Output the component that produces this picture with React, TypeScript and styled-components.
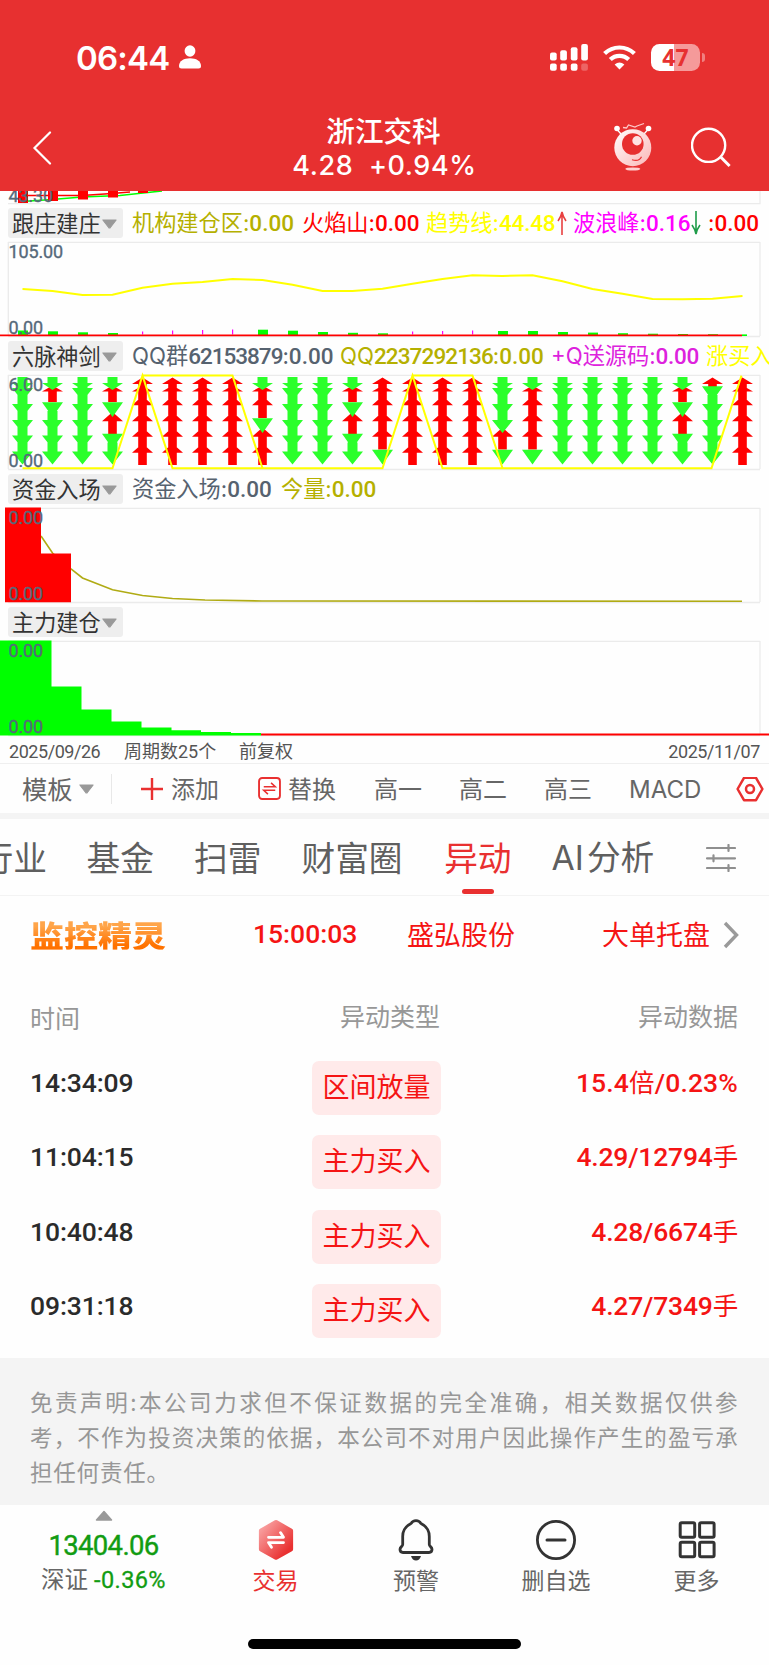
import React from "react";
import styled, { createGlobalStyle } from "styled-components";

const CJK = '"Noto Sans CJK SC", sans-serif';
const NUM = `Roboto, ${CJK}`;
const UI = `Inter, ${CJK}`;

const Global = createGlobalStyle`
  html, body { margin: 0; padding: 0; background: #fff; }
  * { box-sizing: border-box; }
  svg { display: block; flex: none; }
`;

const Screen = styled.main`
  width: 769px;
  height: 1665px;
  overflow: hidden;
  background: #fefefe;
  font-family: ${UI};
  color: #5c5c5c;
  display: flex;
  flex-direction: column;
  > * { flex: none; }
`;

/* ---------- header ---------- */
const Header = styled.header`
  height: 191px;
  background: #e73030;
  color: #fff;
  display: flex;
  flex-direction: column;
`;
const StatusBar = styled.div`
  height: 107px;
  padding: 7px 64px 0 76px;
  display: flex;
  align-items: center;
`;
const Clock = styled.span`
  font-size: 33px;
  font-weight: 600;
  line-height: 40px;
  padding-top: 1px;
  letter-spacing: -0.8px;
  width: 102px;
  white-space: nowrap;
`;
const StatusIcons = styled.div`
  margin-left: auto;
  display: flex;
  align-items: center;
  gap: 15px;
`;
const Battery = styled.div`
  width: 49px;
  height: 27px;
  border-radius: 8.5px;
  background: linear-gradient(90deg, #fff 47%, #f59a9a 47%);
  color: #e73030;
  font: 700 23px/27px "Noto Sans", sans-serif;
  text-align: center;
`;
const BatteryGroup = styled.div`
  display: flex;
  align-items: center;
  gap: 2px;
`;
const BatteryNub = styled.i`
  width: 3px;
  height: 9px;
  border-radius: 0 4px 4px 0;
  background: #f08080;
`;
const TitleBar = styled.div`
  height: 84px;
  display: flex;
  padding: 0 38px 0 32px;
`;
const TitleSide = styled.div<{ $end?: boolean }>`
  width: 150px;
  display: flex;
  justify-content: ${(p) => (p.$end ? "flex-end" : "flex-start")};
  gap: 38px;
  padding-top: ${(p) => (p.$end ? 15 : 24)}px;
`;
const TitleText = styled.div`
  flex: 1;
  display: flex;
  flex-direction: column;
  align-items: center;
  padding-left: 4px;
`;
const StockName = styled.h1`
  margin: 4px 0 0;
  font: 500 28.6px/38px ${CJK};
`;
const StockPrice = styled.div`
  margin-top: 2px;
  padding-left: 2px;
  font: 500 27px/30px Inter, sans-serif;
  white-space: pre;
  letter-spacing: 0.6px;
`;
const SearchIcon = styled.svg`
  margin-top: 4px;
`;

/* ---------- indicator panels ---------- */
const PanelHead = styled.div`
  height: 30px;
  padding-left: 8px;
  display: flex;
  align-items: center;
`;
const IndicatorChip = styled.div`
  flex: none;
  width: 115px;
  height: 30px;
  margin-right: 9px;
  padding: 0 0 2px 4px;
  border-radius: 3px;
  background: #eeeeee;
  color: #333;
  font: 400 22.2px/28px ${CJK};
  display: flex;
  align-items: center;
  gap: 1px;
  svg { margin-top: 4px; }
`;
const Legend = styled.span<{ $w: number; $color: string; $shift?: number }>`
  flex: none;
  width: ${(p) => p.$w}px;
  margin-left: ${(p) => p.$shift ?? 0}px;
  color: ${(p) => p.$color};
  font: 400 22.2px/29px ${UI};
  padding-bottom: 1px;
  white-space: nowrap;
`;
const Value = styled.b<{ $sp?: number }>`
  font: 500 22.5px/29px ${NUM};
  letter-spacing: ${(p) => p.$sp ?? 0}px;
`;

const DateRow = styled.div`
  height: 24px;
  padding: 0 9px;
  display: flex;
  align-items: center;
  border-bottom: 1px solid #efefef;
  color: #555;
  font: 400 18px/24px ${NUM};
  span { white-space: nowrap; }
`;
const DateItem = styled.span<{ $w?: number; $sp?: number }>`
  width: ${(p) => (p.$w ? `${p.$w}px` : "auto")};
  margin-left: ${(p) => (p.$w ? 0 : "auto")};
  letter-spacing: ${(p) => p.$sp ?? 0}px;
`;

/* ---------- toolbar + tabs ---------- */
const Toolbar = styled.div`
  height: 49px;
  padding: 2px 0 0 22px;
  display: flex;
  align-items: center;
  color: #666;
  font: 400 24px/47px ${UI};
`;
const Tool = styled.div<{ $w: number; $gap?: number; $size?: number }>`
  flex: none;
  width: ${(p) => p.$w}px;
  display: flex;
  align-items: center;
  gap: ${(p) => p.$gap ?? 8}px;
  font-size: ${(p) => p.$size ?? 24}px;
  white-space: nowrap;
  svg { margin-bottom: 2px; }
`;
const ToolDivider = styled.i`
  width: 1px;
  height: 30px;
  background: #e8e8e8;
  margin: 0 29px 2px 0;
`;
const Band = styled.div`
  height: 6px;
  background: #f4f4f4;
`;
const Tabs = styled.nav`
  height: 77px;
  border-bottom: 1px solid #f3f3f3;
  display: flex;
  gap: 39.6px;
  color: #5f5f5f;
  font: 400 33.7px/79px ${UI};
`;
const Tab = styled.div<{ $active?: boolean; $shift?: number }>`
  flex: none;
  display: flex;
  flex-direction: column;
  align-items: center;
  margin-left: ${(p) => p.$shift ?? 0}px;
  color: ${(p) => (p.$active ? "#e93030" : "inherit")};
  white-space: nowrap;
  height: 76px;
`;
const LatinTab = styled(Tab)`
  flex-direction: row;
  gap: 3px;
`;
const Underline = styled.i`
  width: 32px;
  height: 5px;
  margin-top: -9px;
  border-radius: 3px;
  background: #e93030;
`;
const FilterIcon = styled.svg`
  margin: 25px 0 0 12px;
`;

/* ---------- alerts ---------- */
const AlertRow = styled.div`
  height: 89px;
  padding: 0 30px 14px 30px;
  display: flex;
  align-items: center;
  color: #f51414;
  font: 400 27px/40px ${CJK};
  svg { margin-top: 2px; }
`;
const Brand = styled.strong`
  width: 223px;
  font: 900 34px/34px ${CJK};
  padding-top: 3px;
  span {
    display: inline-block;
    transform: scaleY(0.86);
    background: linear-gradient(#ffa54a 20%, #ff7200 85%);
    -webkit-background-clip: text;
    background-clip: text;
    color: transparent;
  }
`;
const AlertTime = styled.span`
  width: 154px;
  font: 500 26.5px/40px ${NUM};
`;
const AlertKind = styled.span`
  margin-left: auto;
  margin-right: 13px;
`;
const TableHead = styled.div`
  height: 64px;
  padding: 0 31px 0 30px;
  display: grid;
  grid-template-columns: 218px 192px 1fr;
  justify-items: end;
  align-items: center;
  color: #979797;
  font: 400 25px/40px ${CJK};
  span { margin-bottom: 4px; }
  span:first-child { justify-self: start; margin-bottom: 0; }
`;
const TableRow = styled.div`
  height: 74.3px;
  padding: 0 31px 0 30px;
  display: grid;
  grid-template-columns: 219px 192px 1fr;
  justify-items: end;
  font: 500 26.5px/40px ${NUM};
`;
const RowTime = styled.span`
  justify-self: start;
  color: #2b2b2b;
  padding-top: 2px;
  letter-spacing: -0.1px;
`;
const Badge = styled.span`
  width: 129px;
  height: 54px;
  border-radius: 7px;
  background: #ffeaea;
  color: #f51414;
  font: 400 27px/50px ${CJK};
  text-align: center;
`;
const RowData = styled.span<{ $sp: number }>`
  color: #f51414;
  letter-spacing: ${(p) => p.$sp}px;
  i { font: 400 25.5px/40px ${CJK}; }
`;
const TableBody = styled.div`
  height: 308.5px;
  padding-top: 12px;
`;
const Disclaimer = styled.div`
  height: 147px;
  background: #f4f4f4;
  padding: 26px 31px 0 30px;
  color: #979797;
  font: 400 22.5px/35px ${CJK};
`;
const DisclaimerLine = styled.div<{ $last?: boolean }>`
  height: 35px;
  white-space: nowrap;
  display: flex;
  letter-spacing: ${(p) => (p.$last ? 0.8 : 0)}px;
  justify-content: ${(p) => (p.$last ? "flex-start" : "space-between")};
`;

/* ---------- bottom bar ---------- */
const BottomBar = styled.footer`
  height: 160px;
  display: flex;
  flex-direction: column;
  align-items: center;
`;
const BottomRow = styled.div`
  width: 769px;
  height: 134.5px;
  display: grid;
  grid-template-columns: 207px 137px 144px 136px 145px;
`;
const IndexCell = styled.div`
  display: flex;
  flex-direction: column;
  align-items: center;
  padding-top: 5px;
  color: #129c12;
`;
const IndexValue = styled.div`
  margin-top: 9px;
  font: 400 27.5px/32px ${NUM};
  letter-spacing: -0.65px;
  -webkit-text-stroke: 0.4px #129c12;
`;
const IndexChange = styled.div`
  margin-top: 2px;
  font: 400 23.5px/32px ${NUM};
  -webkit-text-stroke: 0.3px #129c12;
  letter-spacing: 0.4px;
  white-space: nowrap;
  span { color: #666; -webkit-text-stroke: 0; margin-right: 6px; letter-spacing: 0; }
`;
const Action = styled.div<{ $hot?: boolean }>`
  display: flex;
  flex-direction: column;
  align-items: center;
  padding-top: 13px;
  color: ${(p) => (p.$hot ? "#e93030" : "#666")};
  font: 400 23px/34px ${CJK};
`;
const HomeIndicator = styled.i`
  width: 273px;
  height: 10px;
  border-radius: 5px;
  background: #000;
`;

const Caret = () => (
  <svg width="15" height="10" viewBox="0 0 14 9">
    <path d="M.8 .8h12.4L7.8 7.8q-.8.9-1.6 0z" fill="#999" stroke="#999" strokeLinejoin="round" />
  </svg>
);

const xAt = (i: number) => 22.5 + 30 * i;

const Frame = () => <path d="M8 4.3H760M8.2 98.5H760M8.3 4V98M760 4V98" stroke="#ebebeb" strokeWidth="1.3" fill="none" />;
const Scale = ({ y, children }: { y: number; children: string }) => (
  <text x="8.5" y={y} fontFamily="Roboto" fontSize="18" letterSpacing="-.15" fill="#56697a" stroke="#56697a" strokeWidth=".35">
    {children}
  </text>
);

const trend = [51, 53, 57, 56.7, 49.7, 45.7, 44, 41, 42, 46.7, 53, 53, 50.7, 45.7, 41, 37.3, 38, 37.3, 43.3, 51, 55.7, 61, 61.3, 60.7, 58];
const volume = [4.5, 3.7, 2.7, 2, 0, 0, 0, 0, 5.3, 4.3, 3, 2.2, 1.7, 0, 0, 0, 4, 4, 3, 2.4, 1.8, 1.3, 1, 0.8, 0.6];
const ticks: [number, number][] = [[4, 3], [5, 4], [6, 4.5], [7, 5], [13, 3], [14, 3.5], [15, 4]];

const TrendChart = () => (
  <svg width="769" height="103">
    <Frame />
    <Scale y={20}>105.00</Scale>
    {volume.map((v, i) => v > 0 && <rect key={i} x={xAt(i) + (i === 24 ? -0.5 : -4.5)} y={97 - v} width={i === 24 ? 5 : 10} height={v + (i === 24 ? 1 : 0)} fill="#0f0" />)}
    {ticks.map(([i, v]) => <rect key={i} x={xAt(i) - 0.5} y={96.5 - v} width="1.2" height={v} fill="#f0f" />)}
    <path d="M0 97.4H742" stroke="red" strokeWidth="1.6" />
    <Scale y={96}>0.00</Scale>
    <polyline points={trend.map((y, i) => `${xAt(i)},${y}`).join(" ")} fill="none" stroke="#ff0" strokeWidth="2" />
  </svg>
);

const signals = [
  "GGGGGG", "GRGGGG", "GGGGGG", "GRGRGG", "RRRRRR", "RRRRRR", "RRRRRR", "RRRRRR", "GRRGRR",
  "GGGGGG", "GGGGGG", "GRGRGG", "RRRRRG", "RRRRRR", "RRRRRR", "RRRRRR", "GGGGRG", "GRRRRG",
  "GGGGGG", "GGGGGG", "GGGGGG", "GGGGGG", "GRGRGG", "RGGGGG", "RRRRRR",
];
const upTip = [6.5, 14.5, 25, 41, 56.5, 72.5];
const downTip = [19, 30, 46, 62, 77.5, 93.5];

const upArrow = (x: number, k: number) => {
  const t = upTip[k];
  const head = k === 0 ? 6.5 : k === 1 ? 6 : 9.3;
  const foot = k === 0 ? 19 : k === 1 ? 31 : Math.min(t + 22, 94);
  return `M${x} ${t}L${x + 10.5} ${t + head}H${x + 4.3}V${foot}H${x - 4.3}V${t + head}H${x - 10.5}Z`;
};
/* The stem reaches up into the arrow above only where that one also points down. */
const downArrow = (x: number, k: number, joined: boolean) => {
  const t = downTip[k];
  const base = k === 0 ? 12 : t - (joined ? 13 : 14.8);
  const top = k === 0 ? 6 : joined ? base - (k === 1 ? 4 : 9) : base;
  return `M${x} ${t}L${x + 10.5} ${base}H${x + 5}V${top}H${x - 5}V${base}H${x - 10.5}Z`;
};

const SignalChart = () => (
  <svg width="769" height="103">
    <Frame />
    {signals.map((s, i) => {
      const x = xAt(i);
      const ks = [0, 1, 2, 3, 4, 5];
      return (
        <g key={i}>
          <path d={ks.filter((k) => s[k] === "R").map((k) => upArrow(x, k)).join("")} fill="red" />
          <path d={ks.filter((k) => s[k] === "G").map((k) => downArrow(x, k, s[k - 1] === "G")).join("")} fill="#2bff2b" />
        </g>
      );
    })}
    <g stroke="#ff0" strokeWidth="2" fill="none">
      <polyline points="22.5,97.3 112.5,97.3 142.5,4.6 172.5,97.3 382.5,97.3 412.5,4.6 442.5,97.3 711.5,97.3 741.5,4.6" />
      <polyline points="142.5,4.6 232.5,4.6 262.5,97.3" />
      <polyline points="412.5,4.6 472.5,4.6 502.5,97.3" />
    </g>
    <Scale y={20}>6.00</Scale>
    <Scale y={96}>0.00</Scale>
  </svg>
);

const InflowChart = () => (
  <svg width="769" height="103">
    <Frame />
    <path d="M41 32L52.5 49L71 65L82.5 74L112.5 85.7L142.5 91.5L172.5 94.5L205 96L262 97L742 97.3" fill="none" stroke="#b0ab14" strokeWidth="1.6" />
    <path d="M5 3.5H41V49.5H71V98.3H5Z" fill="red" />
    <Scale y={20}>0.00</Scale>
    <Scale y={96}>0.00</Scale>
  </svg>
);

const BuildChart = () => (
  <svg width="769" height="103">
    <Frame />
    <path d="M0 3.5H51.5V49.5H81.5V72.5H111.5V84.5H141.5V90.5H171.5V93.2H201V95H231V96H261V98.5H0Z" fill="#0f0" />
    <path d="M261 97.4H769" stroke="red" strokeWidth="2" />
    <Scale y={20}>0.00</Scale>
    <Scale y={96}>0.00</Scale>
  </svg>
);

const TopChart = () => (
  <svg width="769" height="17">
    <path d="M8 12.7H760V0" fill="none" stroke="#ebebeb" strokeWidth="1.3" />
    <path d="M22 10.5L52 8.5L82 6L120 4.5L143 2L162 0" fill="none" stroke="#0f0" strokeWidth="1.6" />
    <path d="M22 4.5H82L112 2.5L130 1" fill="none" stroke="red" strokeWidth="1.4" />
    <path d="M18 0H28V12H18ZM48 0H58V10H48ZM78 0H88V8.5H78ZM108 0H118V6.5H108ZM138 0H148V2H138Z" fill="red" />
    <Scale y={10.5}>43.30</Scale>
  </svg>
);

const rows = [
  ["14:34:09", "区间放量", "15.4", "倍", "/0.23%"],
  ["11:04:15", "主力买入", "4.29/12794", "手", ""],
  ["10:40:48", "主力买入", "4.28/6674", "手", ""],
  ["09:31:18", "主力买入", "4.27/7349", "手", ""],
];

const disclaimer = [
  "免责声明:本公司力求但不保证数据的完全准确，相关数据仅供参",
  "考，不作为投资决策的依据，本公司不对用户因此操作产生的盈亏承",
  "担任何责任。",
];

export default function App() {
  return (
    <Screen>
      <Global />
      <Header>
        <StatusBar>
          <Clock>06:44</Clock>
          <svg width="24" height="24" viewBox="0 0 24 24" fill="#fff">
            <ellipse cx="12" cy="6" rx="5.4" ry="5.8" />
            <path d="M1 21C1 16 6 13.3 12 13.3S23 16 23 21Q23 23.5 20.5 23.5H3.5Q1 23.5 1 21Z" />
          </svg>
          <StatusIcons>
            <svg width="38" height="27" viewBox="0 0 38 27" fill="#fff">
              <rect x="0" y="8.5" width="6.7" height="8" rx="2" />
              <rect x="10.2" y="6.3" width="6.7" height="10.2" rx="2" />
              <rect x="20.8" y="3.2" width="6.7" height="13.3" rx="2" />
              <rect x="31.2" y="0" width="6.7" height="16.5" rx="2" />
              <rect x="0" y="19.5" width="6.7" height="7.3" rx="2" />
              <rect x="10.2" y="19.5" width="6.7" height="7.3" rx="2" />
              <rect x="20.8" y="19.5" width="6.7" height="7.3" rx="2" />
              <rect x="31.2" y="19.5" width="6.7" height="7.3" rx="2" opacity=".25" />
            </svg>
            <svg width="33" height="25" viewBox="0 0 33 25" fill="none" stroke="#fff" strokeWidth="4.2">
              <path d="M1.6 8.6A21.2 21.2 0 0 1 31.4 8.6" />
              <path d="M7.3 14.6A13 13 0 0 1 25.7 14.6" />
              <path d="M11.6 19.5Q16.5 15.6 21.4 19.5L16.5 24.6Z" fill="#fff" stroke="none" />
            </svg>
            <BatteryGroup>
              <Battery>47</Battery>
              <BatteryNub />
            </BatteryGroup>
          </StatusIcons>
        </StatusBar>
        <TitleBar>
          <TitleSide>
            <svg width="20" height="34" viewBox="0 0 20 34">
              <path d="M18 1.5L2.5 17L18 32.5" fill="none" stroke="#fff" strokeWidth="2.2" strokeLinecap="round" />
            </svg>
          </TitleSide>
          <TitleText>
            <StockName>浙江交科</StockName>
            <StockPrice>{"4.28  +0.94%"}</StockPrice>
          </TitleText>
          <TitleSide $end>
            <svg width="40" height="50" viewBox="0 0 40 50">
              <defs>
                <linearGradient id="bot" x1="0" y1="0" x2="1" y2="1">
                  <stop offset="0" stopColor="#fff" />
                  <stop offset="1" stopColor="#fbb6b6" />
                </linearGradient>
              </defs>
              <g stroke="#fff" strokeWidth="1.3" fill="none">
                <path d="M4 7.5L8 12M35 7.5L31 12" />
                <path d="M10 5.5L13.5 6L15.5 3L22 5L24 4L31 1.5" stroke="#ffc9c9" />
              </g>
              <circle cx="4" cy="6.5" r="2.8" fill="#fff" />
              <circle cx="35.5" cy="6.5" r="2.8" fill="#fff" />
              <circle cx="19.8" cy="25.7" r="18.5" fill="url(#bot)" />
              <circle cx="19.8" cy="22" r="10.8" fill="#e73030" />
              <circle cx="24" cy="18.7" r="4.7" fill="#ffe3e3" />
              <path d="M19 37.7Q26 40 28.5 34.7" stroke="#e73030" strokeWidth="1.2" fill="none" />
              <ellipse cx="19.8" cy="47" rx="7.5" ry="1.6" fill="#ffd0d0" />
            </svg>
            <SearchIcon width="40" height="42" viewBox="0 0 40 42" fill="none" stroke="#fff" strokeWidth="2.4">
              <circle cx="17.6" cy="19.3" r="16.6" />
              <path d="M29.2 30.5L38.6 40" strokeWidth="3" />
            </SearchIcon>
          </TitleSide>
        </TitleBar>
      </Header>

      <TopChart />
      <PanelHead>
        <IndicatorChip>跟庄建庄<Caret /></IndicatorChip>
        <Legend $w={170} $color="#b5b000">机构建仓区:<Value>0.00</Value></Legend>
        <Legend $w={124} $color="#f00">火焰山:<Value>0.00</Value></Legend>
        <Legend $w={131} $color="#ff0">趋势线:<Value $sp={-0.2}>44.48</Value></Legend>
        <svg width="10" height="26" viewBox="0 0 10 26" fill="none" stroke="#e84040" strokeWidth="1.6"><path d="M5 25V3M1 11Q4 7 5 2Q6 7 9 11" /></svg>
        <Legend $w={118} $color="#f0f" $shift={6}>波浪峰:<Value>0.16</Value></Legend>
        <svg width="10" height="26" viewBox="0 0 10 26" fill="none" stroke="#1f9c4a" strokeWidth="1.6"><path d="M5 1V23M1 15Q4 19 5 24Q6 19 9 15" /></svg>
        <Legend $w={60} $color="#f00" $shift={7}>:<Value>0.00</Value></Legend>
      </PanelHead>
      <TrendChart />
      <PanelHead>
        <IndicatorChip>六脉神剑<Caret /></IndicatorChip>
        <Legend $w={208} $color="#56626f">QQ群<Value $sp={-1}>62153879</Value>:<Value>0.00</Value></Legend>
        <Legend $w={211} $color="#b5b000">QQ<Value $sp={-0.9}>2237292136</Value>:<Value>0.00</Value></Legend>
        <Legend $w={155} $color="#dd22dd">+Q送源码:<Value $sp={-0.3}>0.00</Value></Legend>
        <Legend $w={90} $color="#ff0">涨买入:</Legend>
      </PanelHead>
      <SignalChart />
      <PanelHead>
        <IndicatorChip>资金入场<Caret /></IndicatorChip>
        <Legend $w={149} $color="#56626f">资金入场:<Value>0.00</Value></Legend>
        <Legend $w={110} $color="#b5b000">今量:<Value>0.00</Value></Legend>
      </PanelHead>
      <InflowChart />
      <PanelHead>
        <IndicatorChip>主力建仓<Caret /></IndicatorChip>
      </PanelHead>
      <BuildChart />

      <DateRow>
        <DateItem $w={115} $sp={-0.45}>2025/09/26</DateItem>
        <DateItem $w={115}>周期数25个</DateItem>
        <DateItem $w={80}>前复权</DateItem>
        <DateItem $sp={-0.4}>2025/11/07</DateItem>
      </DateRow>

      <Toolbar>
        <Tool $w={89} $size={25.3} $gap={6}>模板<Caret /></Tool>
        <ToolDivider />
        <Tool $w={117}>
          <svg width="22" height="22" stroke="#e93030" strokeWidth="2.4"><path d="M0 11H22M11 0V22" /></svg>
          添加
        </Tool>
        <Tool $w={116} $gap={7}>
          <svg width="23" height="23" viewBox="0 0 22 22" fill="none" stroke="#e93030" strokeWidth="1.8">
            <rect x="1" y="1" width="20" height="20" rx="3" />
            <path d="M5.5 9.3H16.5L12.5 5.6M16.5 12.7H5.5L9.5 16.4" strokeWidth="1.5" />
          </svg>
          替换
        </Tool>
        <Tool $w={85}>高一</Tool>
        <Tool $w={85}>高二</Tool>
        <Tool $w={85}>高三</Tool>
        <Tool $w={107}>MACD</Tool>
        <svg width="28" height="26" viewBox="0 0 28 26" fill="none" stroke="#e93030" strokeWidth="2.5" strokeLinejoin="round">
          <path d="M8 0.8H20L26.4 12L20 23.2H8L1.6 12Z" />
          <circle cx="14" cy="12" r="4" />
        </svg>
      </Toolbar>
      <Band />
      <Tabs>
        <Tab $shift={-20.5}>行业</Tab>
        <Tab>基金</Tab>
        <Tab $shift={0.5}>扫雷</Tab>
        <Tab $shift={0.5}>财富圈</Tab>
        <Tab $active $shift={2}>异动<Underline /></Tab>
        <LatinTab $shift={0.5}><span>AI</span><span>分析</span></LatinTab>
        <FilterIcon width="30" height="28" viewBox="0 0 30 28" stroke="#8f8f8f" strokeWidth="2.2" strokeLinecap="round">
          <path d="M1 4H29M1 14.3H29M1 24H29" />
          <path d="M22.5 1V7M7.5 11.3V17.3M22.5 21V27" />
        </FilterIcon>
      </Tabs>

      <AlertRow>
        <Brand><span>监控精灵</span></Brand>
        <AlertTime>15:00:03</AlertTime>
        <span>盛弘股份</span>
        <AlertKind>大单托盘</AlertKind>
        <svg width="16" height="28" viewBox="0 0 16 28"><path d="M2 2L13.5 14L2 26" fill="none" stroke="#9a9a9a" strokeWidth="3.4" /></svg>
      </AlertRow>
      <TableHead>
        <span>时间</span>
        <span>异动类型</span>
        <span>异动数据</span>
      </TableHead>
      <TableBody>
        {rows.map((r) => (
          <TableRow key={r[0]}>
            <RowTime>{r[0]}</RowTime>
            <Badge>{r[1]}</Badge>
            <RowData $sp={r[4] ? 0.15 : -0.2}>{r[2]}<i>{r[3]}</i>{r[4]}</RowData>
          </TableRow>
        ))}
      </TableBody>

      <Disclaimer>
        {disclaimer.map((line, n) => (
          <DisclaimerLine key={n} $last={n === 2}>
            {n === 2 ? line : Array.from(line).map((c, i) => <span key={i}>{c}</span>)}
          </DisclaimerLine>
        ))}
      </Disclaimer>

      <BottomBar>
        <BottomRow>
          <IndexCell>
            <svg width="18" height="11"><path d="M9 1.5L16.5 10H1.5Z" fill="#999" stroke="#999" strokeWidth="1.5" strokeLinejoin="round" /></svg>
            <IndexValue>13404.06</IndexValue>
            <IndexChange><span>深证</span>-0.36%</IndexChange>
          </IndexCell>
          <Action $hot>
            <svg width="40" height="44" viewBox="0 0 40 44">
              <defs>
                <linearGradient id="hex" x1="0" y1="0" x2="1" y2="1">
                  <stop offset=".1" stopColor="#f89c9c" />
                  <stop offset=".85" stopColor="#e93030" />
                </linearGradient>
              </defs>
              <path d="M20 3L36 12V32L20 41L4 32V12Z" fill="url(#hex)" stroke="url(#hex)" strokeWidth="5" strokeLinejoin="round" transform="translate(1.5 1.6) scale(.925)" />
              <path d="M12.5 19.3H27.5L24.5 14.6M27.5 24.6H12.5L15.5 29.3" fill="none" stroke="#fff" strokeWidth="2.8" strokeLinecap="round" strokeLinejoin="round" />
            </svg>
            交易
          </Action>
          <Action>
            <svg width="40" height="44" viewBox="0 0 40 44" fill="none" stroke="#333" strokeWidth="2.8" strokeLinejoin="round">
              <path d="M20 2.6C22.5 2.6 24 3.8 25 5.6C30.5 8.3 33.3 12.5 33.3 18.5V26.5C33.3 28.5 36 28.8 36 31.3C36 33.3 34.8 34.5 33 34.5H7C5.2 34.5 4 33.3 4 31.3C4 28.8 6.7 28.5 6.7 26.5V18.5C6.7 12.5 9.5 8.3 15 5.6C16 3.8 17.5 2.6 20 2.6Z" />
              <path d="M15 38H25Q23.5 42.5 20 42.5Q16.5 42.5 15 38Z" fill="#333" stroke="none" />
            </svg>
            预警
          </Action>
          <Action>
            <svg width="42" height="44" viewBox="0 0 42 44" fill="none" stroke="#333" strokeWidth="2.8">
              <circle cx="21" cy="22" r="18.6" />
              <path d="M12 22H30" strokeWidth="3" strokeLinecap="round" />
            </svg>
            删自选
          </Action>
          <Action>
            <svg width="40" height="44" viewBox="0 0 40 44" fill="none" stroke="#333" strokeWidth="3">
              <rect x="3.2" y="4.7" width="14.5" height="14.5" rx="1.5" />
              <rect x="22.6" y="4.7" width="14.5" height="14.5" rx="1.5" />
              <rect x="3.2" y="24.2" width="14.5" height="14.5" rx="1.5" />
              <rect x="22.6" y="24.2" width="14.5" height="14.5" rx="1.5" />
            </svg>
            更多
          </Action>
        </BottomRow>
        <HomeIndicator />
      </BottomBar>
    </Screen>
  );
}
